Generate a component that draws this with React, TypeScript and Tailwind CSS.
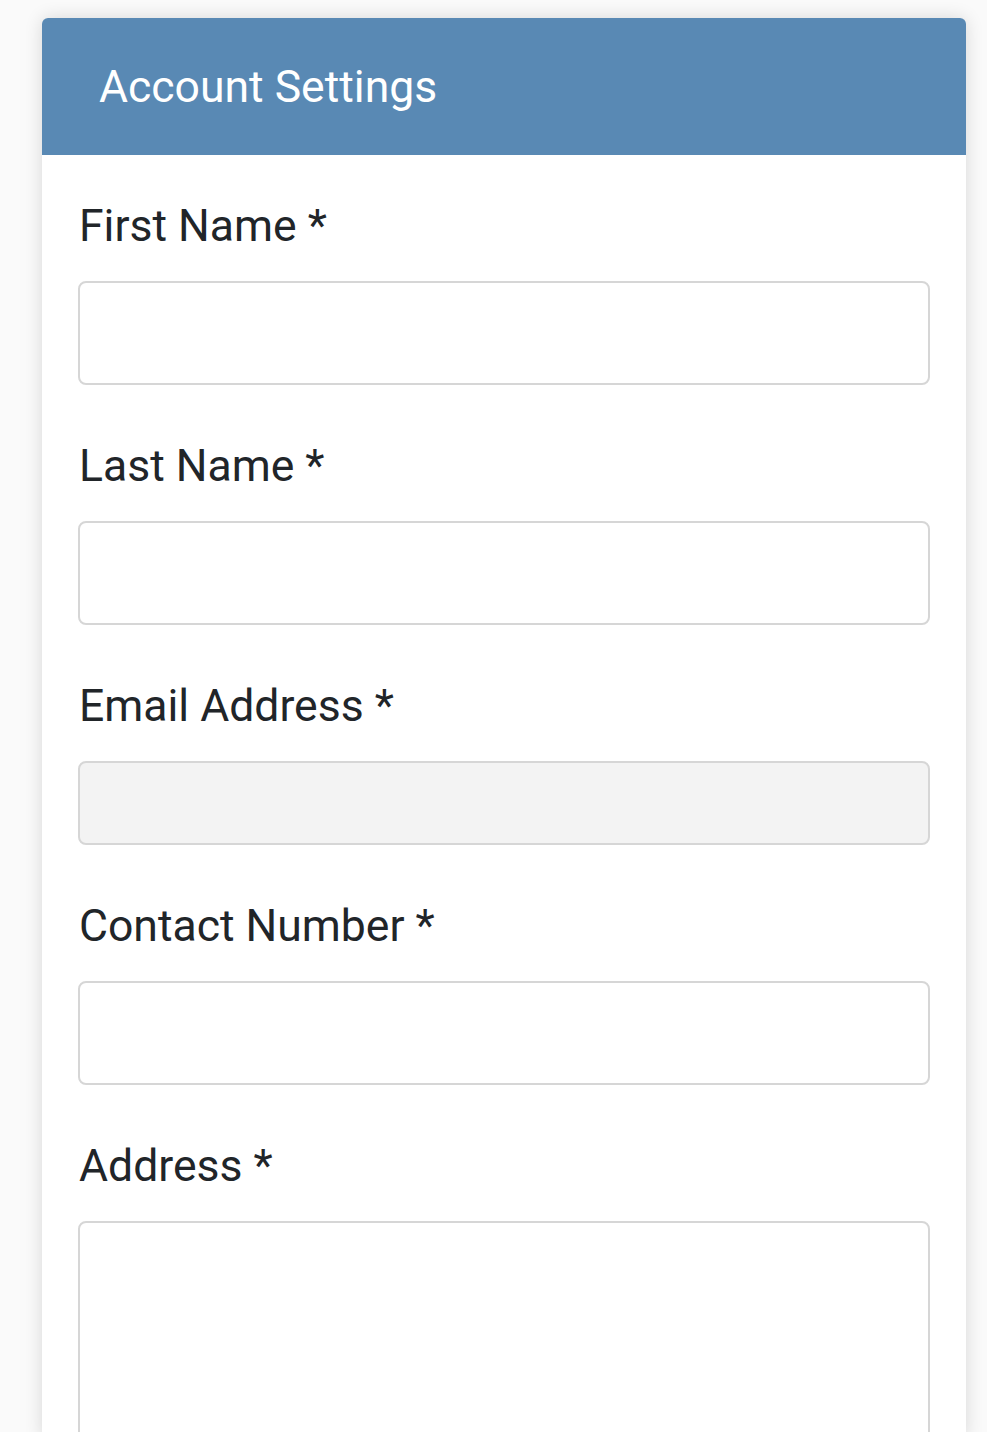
const fields = [
  { label: "First Name *", h: "h-[104px]", disabled: false },
  { label: "Last Name *", h: "h-[104px]", disabled: false },
  { label: "Email Address *", h: "h-[84px]", disabled: true },
  { label: "Contact Number *", h: "h-[104px]", disabled: false },
];

const App = () => {
  return (
    <div
      className="min-h-screen bg-[#fafafa] pl-[42px] pr-[21px] pt-[18px] overflow-hidden"
      style={{ fontFamily: "Roboto, 'Liberation Sans', sans-serif" }}
    >
      <div className="h-[1420px] rounded-t-[6px] bg-white shadow-[0_0_18px_rgba(0,0,0,0.14)]">
        <div className="flex h-[137px] items-center rounded-t-[6px] bg-[#5989b4] px-[57px]">
          <h1 className="text-[44.5px] font-normal leading-[52px] text-white">Account Settings</h1>
        </div>
        <form className="px-[36px] pt-[45px]">
          {fields.map((f) => (
            <div key={f.label} className="mb-[55px]">
              <label className="mb-[29px] block pl-[1px] text-[44.5px] leading-[52px] text-[#212529]">
                {f.label}
              </label>
              <input
                type="text"
                disabled={f.disabled}
                className={`block w-full ${f.h} rounded-[8px] border-2 border-[#d6d6d6] px-[36px] text-[40px] text-[#495057] outline-none ${
                  f.disabled ? "bg-[#f3f3f3]" : "bg-white"
                }`}
              />
            </div>
          ))}
          <div>
            <label className="mb-[29px] block pl-[1px] text-[44.5px] leading-[52px] text-[#212529]">
              Address *
            </label>
            <textarea className="block h-[300px] w-full resize-none rounded-[8px] border-2 border-[#d6d6d6] bg-white px-[36px] py-[24px] text-[40px] outline-none" />
          </div>
        </form>
      </div>
    </div>
  );
};

export default App;
